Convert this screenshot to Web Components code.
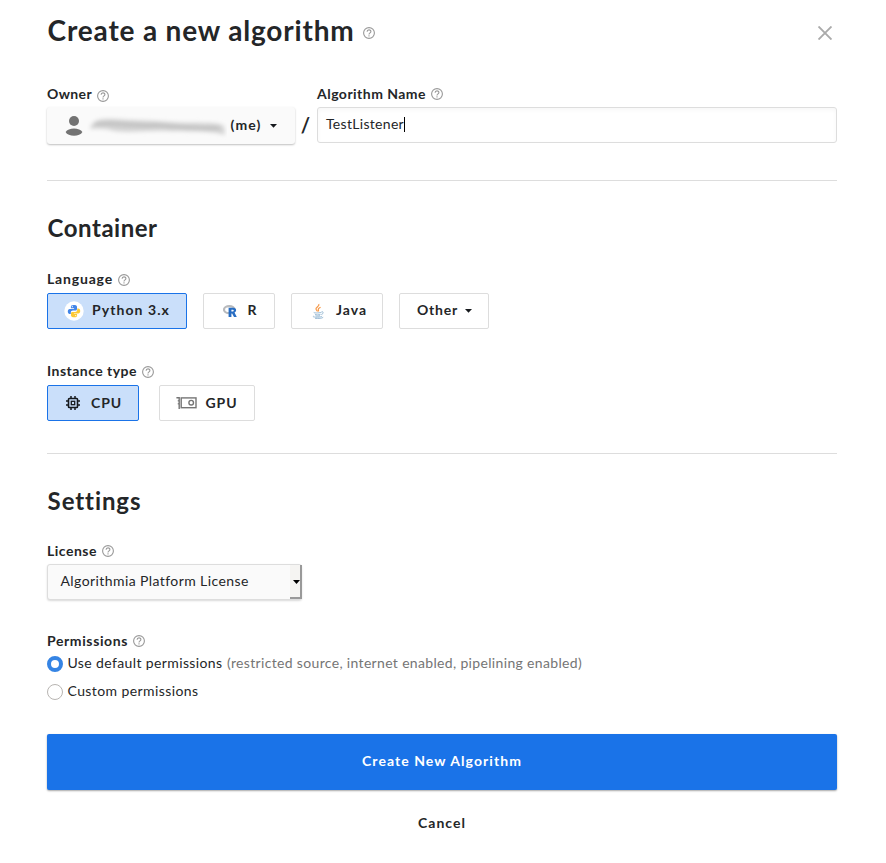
<!DOCTYPE html>
<html lang="en">
<head>
<meta charset="utf-8">
<title>Create a new algorithm</title>
<style>
body{margin:0;background:#fff}
</style>
</head>
<body>
<algorithm-form></algorithm-form>
<script>
const define=(name,html,init)=>{
  const t=document.createElement('template');
  t.innerHTML=html;
  customElements.define(name,class extends HTMLElement{
    constructor(){super();this.attachShadow({mode:'open'}).append(t.content.cloneNode(true))}
    connectedCallback(){if(init)init(this,this.shadowRoot)}
  });
};

/* One line of text, tracked so that it fills the width given in "w". */
define('tracked-text',`<style>
:host{display:block;flex:none;white-space:pre}
span{display:inline-block}
</style><span><slot></slot></span>`,(el,root)=>{
  const s=root.querySelector('span'),w=+el.getAttribute('w');
  el.style.width=w+'px';
  s.style.letterSpacing='0px';
  s.style.letterSpacing=((w-s.getBoundingClientRect().width)/el.textContent.length)+'px';
});

define('help-icon',`<style>
:host{display:block;flex:none;width:12px;height:12px}svg{display:block}
</style><svg width="12" height="12" viewBox="0 0 12 12" fill="none" stroke="#999" stroke-width="1.1"><circle cx="6" cy="6" r="5.4"/><path d="M4.1 4.800C4.100 2.200 7.900 2.300 7.900 4.600C7.900 5.900 6 5.900 6 7.500"/><path d="M6 8.300v1.200"/></svg>`);

define('caret-down',`<style>
:host{display:block;flex:none;width:7px;height:4px}svg{display:block}
</style><svg width="7" height="4" viewBox="0 0 7 4"><path d="M0 0h7L3.5 3.8z" fill="#16191d"/></svg>`);

define('field-label',`<style>
:host{display:flex;height:20px;align-items:center;gap:5px;font-weight:700;line-height:20px}
help-icon{margin-top:var(--drop,2px)}
</style><slot></slot><help-icon></help-icon>`);

define('section-rule',`<style>:host{display:block;height:1px;background:#ddd}</style>`);

define('choice-button',`<style>
:host{display:flex;box-sizing:border-box;height:36px;align-items:center;border:1px solid #ddd;border-radius:2px;background:#fff;font-weight:700;line-height:20px}
:host([selected]){background:#cadffa;border-color:#1a73e8}
::slotted(svg){flex:none;display:block}
::slotted(tracked-text),::slotted(caret-down){margin-bottom:var(--lift,0)}
</style><slot></slot>`);

define('owner-picker',`<style>
:host{display:flex;box-sizing:border-box;width:248px;height:37px;align-items:center;padding-left:18px;background:#fafafa;border-radius:3px;box-shadow:0 1px 2px rgba(0,0,0,.25);font-weight:700}
svg{display:block;flex:none}
.name{margin:0 3px 0 3px}
tracked-text{margin:0 0 2px .5px}
caret-down{margin-left:8.500px}
</style>
<svg width="19" height="22" viewBox="0 0 19 22" fill="#737373"><circle cx="9" cy="6" r="5"/><path d="M.6 17C3 12.3 15 12.3 17.4 17C15 22 3 22 .6 17z"/></svg>
<svg class="name" width="140" height="28" viewBox="0 0 140 28"><defs><filter id="b" x="-10%" y="-80%" width="120%" height="260%"><feGaussianBlur stdDeviation="1.900"/></filter></defs><g filter="url(#b)"><path d="M3 17C5 8 12 7 25 7C48 9 62 8 82 10C104 12 130 9 137 14L138 23C125 18 98 20 82 19C60 18 45 21 28 19C20 16 9 16 3 17z" fill="#d2d2d2"/><path d="M8 12C35 10 50 15 68 13C82 13 98 18 132 16" fill="none" stroke="#bababa" stroke-width="2.500"/></g></svg>
<tracked-text w="31">(me)</tracked-text><caret-down></caret-down>`);

define('name-input',`<style>
:host{display:flex;box-sizing:border-box;width:520px;height:36px;align-items:center;border:1px solid #ddd;border-radius:3px;padding:0 0 1px 8px;background:#fff;box-shadow:inset 0 2px 4px rgba(0,0,0,.035)}
::slotted(*){margin-bottom:2px}
i{width:1px;height:15px;background:#000}
</style><slot></slot><i></i>`);

define('license-select',`<style>
:host{display:flex;box-sizing:border-box;width:255px;height:36px;align-items:center;justify-content:space-between;padding-left:12.500px;border:1px solid #ddd;border-radius:3px;background:#fafafa;box-shadow:0 1px 2px rgba(0,0,0,.15)}
::slotted(*){margin-bottom:2px}
div{box-sizing:border-box;display:flex;width:12px;height:34px;margin-right:-1px;align-items:center;justify-content:flex-end;background:#f5f4f2;border-right:2px solid #999;border-bottom:2px solid #999}
svg{margin-top:2px}
</style><slot></slot><div><svg width="7" height="4" viewBox="0 0 7 4"><path d="M0 0h7L3.5 4z"/></svg></div>`);

define('radio-option',`<style>
:host{display:flex;height:20px;align-items:center;line-height:18px}
i{box-sizing:border-box;width:16px;height:16px;border:1px solid #b8b5b2;border-radius:50%;margin-right:4.500px;background:#fff}
:host([checked]) i{border:4px solid #3584e4}
::slotted(*){margin-top:-2px}
</style><i></i><slot></slot>`);

define('action-button',`<style>
:host{display:flex;justify-content:center;align-items:center;font-weight:700}
:host([primary]){box-sizing:border-box;height:56px;padding-bottom:2px;border-radius:2px;background:#1a73e8;color:#fff;box-shadow:0 1px 2px rgba(0,0,0,.35)}
</style><slot></slot>`);

define('algorithm-form',`<style>
:host{display:flex;flex-direction:column;box-sizing:border-box;width:886px;height:863px;padding:9px 49px 0 47px;font:14px/20px Lato,"Open Sans",sans-serif;color:#242628}
header{display:flex;height:40px;align-items:center;font-size:28px;line-height:40px;font-weight:700}
header tracked-text{margin:2px 0 0 .6px}
header help-icon{margin:8px 0 0 8.400px}
header svg{display:block;margin:8px 5px 0 auto}
h2{margin:32px 0 0 .6px;height:29px;font-size:24px;line-height:30px;font-weight:700}
.row{display:flex}
.owner{margin-top:35px}
.owner>div{display:flex;flex-direction:column;gap:3px}
.slash{width:21px;height:38px;margin-top:23px;padding-right:1px;line-height:36px;text-align:center;font-size:20px;font-weight:700}
.muted{color:#757575}
</style>
<header><tracked-text w="307">Create a new algorithm</tracked-text><help-icon></help-icon>
<svg width="14" height="14" viewBox="0 0 14 14" stroke="#aaa" stroke-width="1.9"><path d="M.5 .5l13 13M13.5 .5l-13 13"/></svg></header>
<div class="row owner">
 <div><field-label style="--drop:4px"><tracked-text w="45">Owner</tracked-text></field-label><owner-picker></owner-picker></div>
 <div class="slash">/</div>
 <div><field-label style="--drop:0px"><tracked-text w="109">Algorithm Name</tracked-text></field-label><name-input><tracked-text w="78">TestListener</tracked-text></name-input></div>
</div>
<section-rule style="margin-top:35px"></section-rule>
<h2><tracked-text w="110">Container</tracked-text></h2>
<field-label style="margin-top:27px"><tracked-text w="66">Language</tracked-text></field-label>
<div class="row" style="gap:16px;margin-top:4px;--lift:2px">
 <choice-button selected style="width:140px;padding-left:16px">
  <svg width="20" height="20" viewBox="0 0 20 20"><circle cx="10" cy="10" r="9.7" fill="#fff"/><path d="M9.7 4.1c-2.2 0-2.8.7-2.8 1.8v1.4h3.2v.6H5.7c-1.2 0-1.9 1-1.9 2.5s.7 2.5 1.8 2.5h1.2v-1.6c0-1.2.9-1.9 2-1.9h2.8c.9 0 1.4-.7 1.4-1.5v-2c0-1.2-1.1-1.8-3.3-1.8z" fill="#4285e8"/><path d="M10.3 16.2c2.2 0 2.8-.7 2.8-1.8V13H9.9v-.5h4.4c1.2 0 1.9-1 1.9-2.4S15.500 7.600 14.400 7.600h-1.200v1.500c0 1.200-.9 1.900-2 1.900H8.400C7.500 11 7 11.600 7 12.400v2c0 1.200 1.100 1.800 3.300 1.800z" fill="#fcc934"/><circle cx="8.300" cy="5.700" r=".6" fill="#fff"/><circle cx="11.700" cy="14.600" r=".6" fill="#fff"/></svg>
  <tracked-text w="78" style="margin-left:8px">Python 3.x</tracked-text></choice-button>
 <choice-button style="width:72px;padding-left:19px">
  <svg width="14" height="14" viewBox="0 0 14 14"><ellipse cx="6.300" cy="5.700" rx="5.300" ry="3.500" fill="none" stroke="#b8babd" stroke-width="2.200"/><path d="M5.600 3.800h4.600c3.800 0 3.600 4.200 1.300 4.700L13.800 13H11L9 9.200h-.6V13H5.600z" fill="#276dc3"/><path d="M8.400 5.800h1.400c1.300 0 1.300 1.700 0 1.700H8.400z" fill="#fff"/></svg>
  <tracked-text w="10" style="margin-left:10.500px">R</tracked-text></choice-button>
 <choice-button style="width:92px;padding-left:20px">
  <svg width="12" height="16" viewBox="0 0 12 16" fill="none"><path d="M6.800 1C8 3.200 3.200 4.500 4 6.200C4.300 7.200 5.500 8 5.500 8.600M8.600 4.200C4.500 6 6.900 6.600 6.500 8.400" stroke="#f79a4a" stroke-width="1.200"/><path d="M2 9.300C.7 10.300 8.500 10 9.500 9.300M9.700 8.700c2.500-.2 1.400 2.500-.4 2.800M3 11.200c.5.900 4 .8 5.500.2M3.500 12.700c.8.500 3.200.5 4.500 0M1.500 13c-2.700 1.300 7.500 1.800 8.600 0M3 15.300c3.500.4 7.300 0 8.200-1" stroke="#8fb3d0" stroke-width=".9"/></svg>
  <tracked-text w="31" style="margin-left:12px">Java</tracked-text></choice-button>
 <choice-button style="width:90px;padding-left:17px"><tracked-text w="41">Other</tracked-text><caret-down style="margin-left:7px;margin-bottom:0"></caret-down></choice-button>
</div>
<field-label style="margin-top:32px"><tracked-text w="90">Instance type</tracked-text></field-label>
<div class="row" style="gap:20px;margin-top:4px">
 <choice-button selected style="width:92px;padding-left:18px">
  <svg width="14" height="14" viewBox="0 0 14 14" fill="none" stroke="#16191d"><rect x="2.500" y="2.500" width="9" height="9" rx=".8" stroke-width="1.600"/><rect x="5.300" y="5.300" width="3.400" height="3.400" stroke-width="1.300"/><path d="M5 0v2M9 0v2M5 12v2M9 12v2M0 5h2M0 9h2M12 5h2M12 9h2" stroke-width="1.500"/></svg>
  <tracked-text w="31" style="margin-left:11px">CPU</tracked-text></choice-button>
 <choice-button style="width:96px;padding-left:16px">
  <svg width="22" height="14" viewBox="0 0 22 14" fill="none" stroke="#757575" stroke-width="1.400"><path d="M.4 1.700h2.800V13"/><path d="M2.300 4v1.500M2.300 7v1.500" stroke-width="1"/><rect x="5.200" y="1.900" width="14.800" height="9.800"/><circle cx="15.200" cy="6.700" r="2.300"/></svg>
  <tracked-text w="32" style="margin-left:7.500px">GPU</tracked-text></choice-button>
</div>
<section-rule style="margin-top:32px"></section-rule>
<h2><tracked-text w="93">Settings</tracked-text></h2>
<field-label style="margin-top:26px;--drop:0px"><tracked-text w="50">License</tracked-text></field-label>
<license-select style="margin-top:3px"><tracked-text w="188">Algorithmia Platform License</tracked-text></license-select>
<field-label style="margin-top:31px;--drop:0px"><tracked-text w="81">Permissions</tracked-text></field-label>
<radio-option checked style="margin-top:3px"><tracked-text w="155">Use default permissions</tracked-text><tracked-text w="355" class="muted" style="margin-left:4.500px">(restricted source, internet enabled, pipelining enabled)</tracked-text></radio-option>
<radio-option style="margin-top:8px"><tracked-text w="131">Custom permissions</tracked-text></radio-option>
<action-button primary style="margin-top:32px"><tracked-text w="160">Create New Algorithm</tracked-text></action-button>
<action-button style="margin-top:23px"><tracked-text w="48">Cancel</tracked-text></action-button>`);
</script>
</body>
</html>
